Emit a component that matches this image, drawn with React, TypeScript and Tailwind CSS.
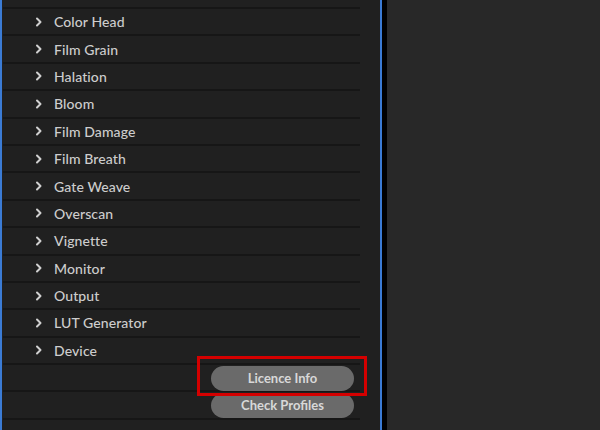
import React from "react";

const items = [
  "",
  "Color Head",
  "Film Grain",
  "Halation",
  "Bloom",
  "Film Damage",
  "Film Breath",
  "Gate Weave",
  "Overscan",
  "Vignette",
  "Monitor",
  "Output",
  "LUT Generator",
  "Device",
  null,
  null,
  null,
];

function Chevron() {
  return (
    <svg width="8" height="10" viewBox="0 0 8 10" className="shrink-0">
      <polyline points="2,1.5 5.5,5 2,8.5" fill="none" stroke="#d0d0d0" strokeWidth="2" strokeLinecap="round" strokeLinejoin="round" />
    </svg>
  );
}

export default function App() {
  return (
    <div className="relative flex h-[430px] w-[600px] overflow-hidden bg-[#282828] font-['Lato','Noto_Sans',sans-serif]">
      {/* left panel */}
      <div className="relative h-full w-[380px] shrink-0 overflow-hidden border-l-2 border-[#3b7bd4] bg-[#202020]">
        <div className="ml-px mt-[-18.4px] w-[357px]">
          {items.map((label, i) => (
            <div key={i} className="flex h-[27.4px] items-center gap-[11px] border-b-2 border-[#161616] pl-[32px]">
              {label !== null && <Chevron />}
              <span className="text-[14px] font-medium tracking-[0.1px] text-[#cdcdcd]">{label}</span>
            </div>
          ))}
        </div>
      </div>

      {/* splitter */}
      <div className="h-full w-[2px] shrink-0 bg-[#3b7bd4]" />
      <div className="h-full w-[5px] shrink-0 bg-black" />

      {/* right panel */}
      <div className="h-full flex-1 bg-[#282828]" />

      {/* buttons */}
      <div className="absolute left-[211px] top-[366px] flex w-[143px] flex-col gap-[2px]">
        <button className="h-[25px] rounded-full bg-[#6a6a6a] text-[13px] font-bold text-[#d8d8d8]">Licence Info</button>
        <button className="h-[25px] rounded-full bg-[#6a6a6a] text-[13px] font-bold text-[#d8d8d8]">Check Profiles</button>
      </div>

      {/* highlight */}
      <div className="absolute left-[197px] top-[356px] h-[40px] w-[170px] border-[3px] border-[#d40000]" />
    </div>
  );
}
